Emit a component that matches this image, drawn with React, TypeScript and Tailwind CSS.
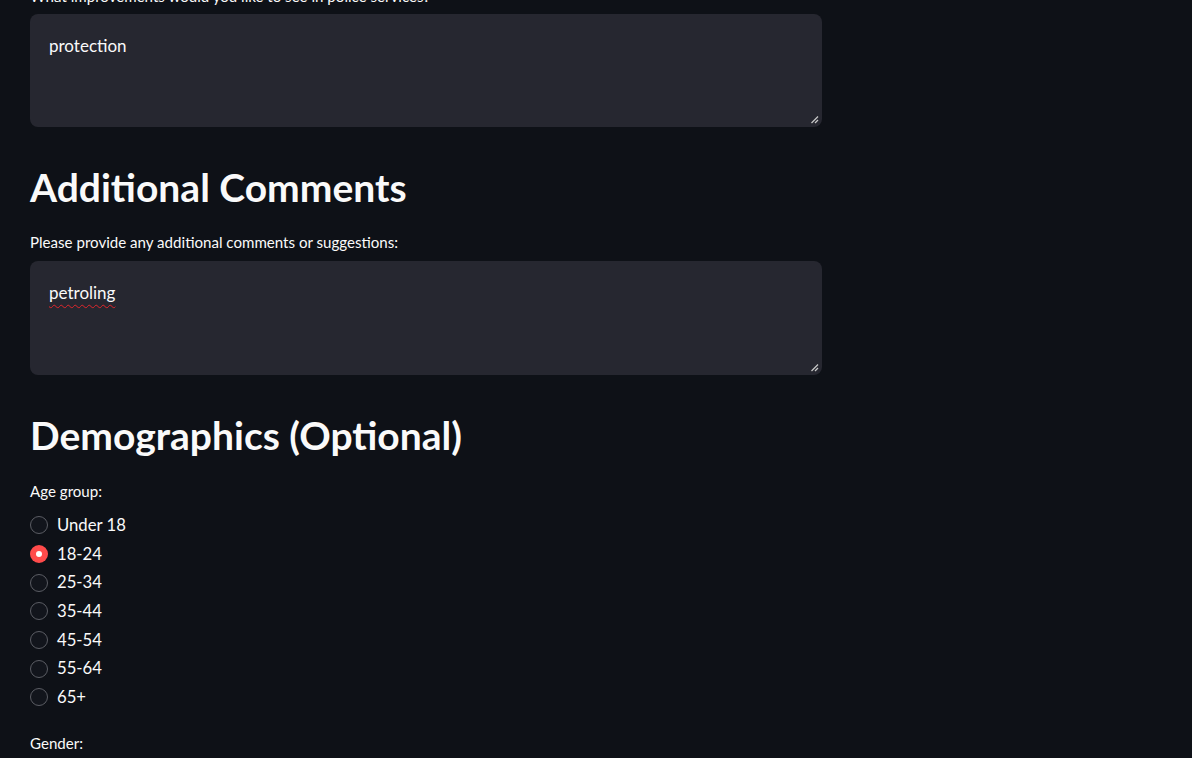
import React from "react";

const font = { fontFamily: '"Lato", "Noto Sans", sans-serif' };

function Grip() {
  return (
    <svg className="absolute right-[3px] bottom-[3px]" width="9" height="9" viewBox="0 0 9 9">
      <line x1="1.5" y1="8" x2="8" y2="1.5" stroke="#c8c8c8" strokeWidth="1.3" />
      <line x1="5" y1="8" x2="8" y2="5" stroke="#c8c8c8" strokeWidth="1.3" />
    </svg>
  );
}

function TextArea({ value, misspelled, tall }: { value: string; misspelled?: boolean; tall?: boolean }) {
  return (
    <div
      className={
        "relative w-[792px] rounded-lg bg-[#262730] pl-[19px] pt-[19px] " + (tall ? "h-[114px]" : "h-[113px]")
      }
    >
      <span
        className={
          "text-[17px] leading-[26px] text-[#fafafa] " +
          (misspelled ? "underline decoration-wavy decoration-[#e0262b] decoration-1 underline-offset-[5px]" : "")
        }
      >
        {value}
      </span>
      <Grip />
    </div>
  );
}

function Radio({ label, checked }: { label: string; checked?: boolean }) {
  return (
    <div className="flex h-[28.7px] items-center gap-[9px]">
      {checked ? (
        <div className="flex h-[18px] w-[18px] items-center justify-center rounded-full bg-[#ff4b4b]">
          <div className="h-[6px] w-[6px] rounded-full bg-white" />
        </div>
      ) : (
        <div className="h-[18px] w-[18px] rounded-full border border-[#5b5d64] bg-[#12151c]" />
      )}
      <span className="text-[16.7px] text-[#fafafa]">{label}</span>
    </div>
  );
}

export default function App() {
  const ages = ["Under 18", "18-24", "25-34", "35-44", "45-54", "55-64", "65+"];
  return (
    <div className="h-[758px] w-[1192px] overflow-hidden bg-[#0e1117]" style={font}>
      <div className="flex w-[792px] flex-col ml-[30px] mt-[-14.5px]">
        <div className="h-[21px] text-[15.1px] leading-[21px] text-[#fafafa]">
          What improvements would you like to see in police services?
        </div>
        <div className="mt-[7.5px]">
          <TextArea value="protection" />
        </div>
        <h2 className="mt-[36px] h-[48px] text-[39px] font-bold leading-[48px] text-[#fafafa]">
          Additional Comments
        </h2>
        <div className="mt-[21px] h-[21px] text-[15.1px] leading-[21px] text-[#fafafa]">
          Please provide any additional comments or suggestions:
        </div>
        <div className="mt-[7.5px]">
          <TextArea value="petroling" misspelled tall />
        </div>
        <h2 className="mt-[36px] h-[48px] text-[39px] font-bold leading-[48px] text-[#fafafa]">
          Demographics (Optional)
        </h2>
        <div className="mt-[22.5px] h-[21px] text-[15.1px] leading-[21px] text-[#fafafa]">Age group:</div>
        <div className="mt-[9px] flex flex-col">
          {ages.map((a) => (
            <Radio key={a} label={a} checked={a === "18-24"} />
          ))}
        </div>
        <div className="mt-[21px] h-[21px] text-[15.1px] leading-[21px] text-[#fafafa]">Gender:</div>
      </div>
    </div>
  );
}
